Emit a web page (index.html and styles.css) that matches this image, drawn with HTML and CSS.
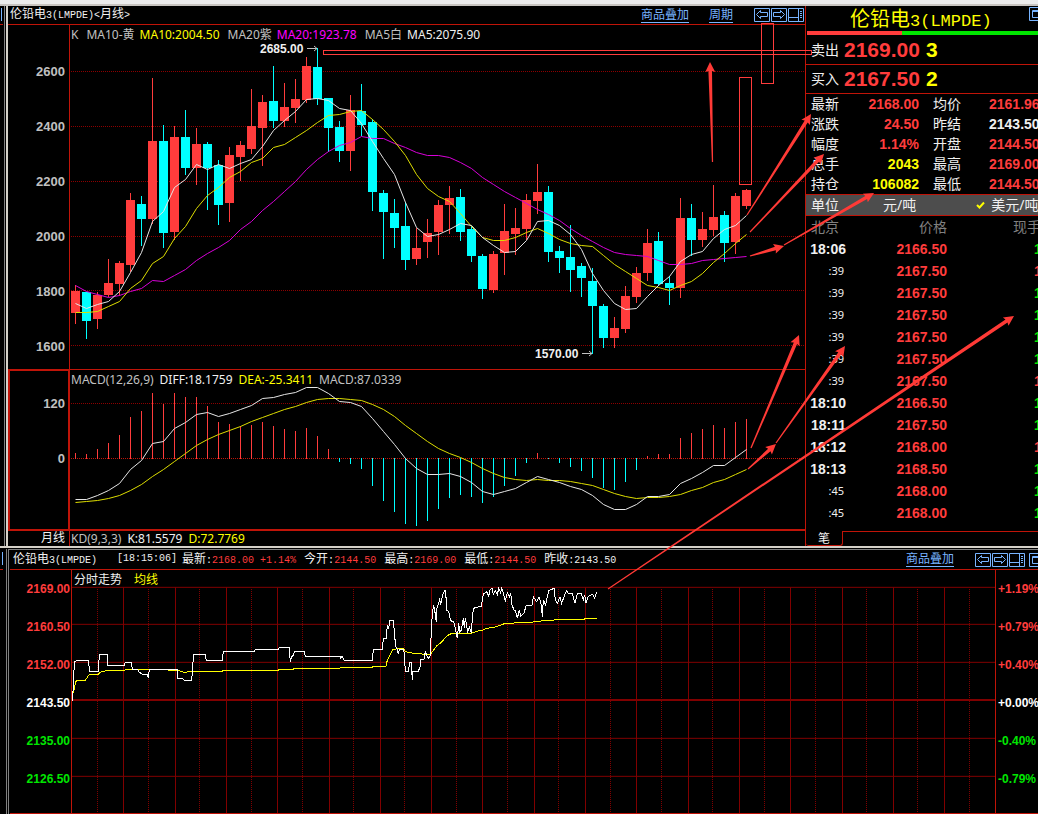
FILE: index.html
```html
<!DOCTYPE html>
<html lang="zh-CN">
<head>
<meta charset="utf-8">
<title>伦铅电3(LMPDE)</title>
<link rel="stylesheet" href="styles.css">
</head>
<body>
<svg class="defs" aria-hidden="true">
  <symbol id="i-left" viewBox="0 0 16 14"><path d="M.5.5h15v13H.5zM2.5 6.500l4-4v2h7v4h-7v2z"/></symbol>
  <symbol id="i-right" viewBox="0 0 16 14"><path d="M.5.5h15v13H.5zM13.500 6.500l-4-4v2h-7v4h7v2z"/></symbol>
  <symbol id="i-split" viewBox="0 0 16 14"><path d="M.5.5h15v13H.5zM10.500 .5v13M.5 9.500h10M12 3.500h2M12 5.500h2M12 7.500h2M12 9.500h2"/></symbol>
  <symbol id="i-window" viewBox="0 0 16 14"><path d="M.5.5h15v13H.5zM3.500 3.500h9v7h-9zM3.500 4.500h9"/></symbol>
</svg>
<div class="frame"></div>
<main class="screen">
  <div class="sliver"></div>
  <section class="monthly">
    <header class="bar">
      <h1 class="name">伦铅电<span class="lat">3(LMPDE)&lt;</span>月线<span class="lat">&gt;</span></h1>
      <nav class="links"><a href="#">商品叠加</a><a href="#">周期</a></nav>
      <div class="tools">
        <button aria-label="上一个"><svg><use href="#i-left"/></svg></button>
        <button aria-label="下一个"><svg><use href="#i-right"/></svg></button>
        <button aria-label="分栏"><svg><use href="#i-split"/></svg></button>
      </div>
    </header>
    <div class="pane candles">
      <ul class="axis">
        <li>2600</li><li>2400</li><li>2200</li><li>2000</li><li>1800</li><li>1600</li>
      </ul>
      <div class="plot">
        <p class="legend ma"><span class="dim">K</span><span class="dim">MA10-黄</span><span class="val yellow">MA10:2004.50</span><span class="dim">MA20紫</span><span class="val magenta">MA20:1923.78</span><span class="dim">MA5白</span><span class="val">MA5:2075.90</span></p>
        <svg id="candle-plot" viewBox="70 45 735 324" preserveAspectRatio="none"></svg>
      </div>
    </div>
    <div class="pane macd">
      <ul class="axis picked"><li>120</li><li>0</li></ul>
      <div class="plot">
        <p class="legend"><span class="dim">MACD(12,26,9)</span><span>DIFF:18.1759</span><span class="yellow">DEA:-25.3411</span><span class="dim">MACD:87.0339</span></p>
        <svg id="macd-plot" viewBox="70 390 735 139" preserveAspectRatio="none"></svg>
      </div>
    </div>
    <div class="pane kd">
      <span class="period">月线</span>
      <p class="legend"><span class="dim">KD(9,3,3)</span><span>K:81.5579</span><span class="yellow">D:72.7769</span></p>
    </div>
  </section>

  <aside class="quote">
    <header class="title">
      <h2>伦铅电<span>3(LMPDE)</span></h2>
      <button aria-label="窗口"><svg><use href="#i-window"/></svg></button>
    </header>
    <div class="ratio"><i></i></div>
    <p class="order ask"><span>卖出</span><b class="red">2169.00</b><b class="yellow">3</b></p>
    <p class="order"><span>买入</span><b class="red">2167.50</b><b class="yellow">2</b></p>
    <table class="stats">
      <colgroup><col class="k"><col class="v"><col class="k2"><col></colgroup>
      <tbody>
      <tr><th>最新</th><td class="red">2168.00</td><th>均价</th><td class="red">2161.96</td></tr>
      <tr><th>涨跌</th><td class="red">24.50</td><th>昨结</th><td>2143.50</td></tr>
      <tr><th>幅度</th><td class="red">1.14%</td><th>开盘</th><td class="red">2144.50</td></tr>
      <tr><th>总手</th><td class="yellow">2043</td><th>最高</th><td class="red">2169.00</td></tr>
      <tr><th>持仓</th><td class="yellow">106082</td><th>最低</th><td class="red">2144.50</td></tr>
      </tbody>
    </table>
    <div class="unit"><span>单位</span><span class="cny">元/吨</span><svg class="check" viewBox="0 0 9 8"><path d="M1 4l2.500 2.500L8 1.500"/></svg><span>美元/吨</span></div>
    <table class="ticks">
      <colgroup><col class="t"><col class="p"><col></colgroup>
      <thead><tr><th>北京</th><th>价格</th><th>现手</th></tr></thead>
      <tbody>
      <tr><td>18:06</td><td>2166.50</td><td class="green">1</td></tr>
      <tr><td class="s">:39</td><td>2167.50</td><td class="red">1</td></tr>
      <tr><td class="s">:39</td><td>2167.50</td><td class="green">1</td></tr>
      <tr><td class="s">:39</td><td>2167.50</td><td class="green">1</td></tr>
      <tr><td class="s">:39</td><td>2167.50</td><td class="green">1</td></tr>
      <tr><td class="s">:39</td><td>2167.50</td><td class="green">1</td></tr>
      <tr><td class="s">:39</td><td>2167.50</td><td class="red">1</td></tr>
      <tr><td>18:10</td><td>2166.50</td><td class="green">1</td></tr>
      <tr><td>18:11</td><td>2167.50</td><td class="green">1</td></tr>
      <tr><td>18:12</td><td>2168.00</td><td class="red">1</td></tr>
      <tr><td>18:13</td><td>2168.50</td><td class="green">1</td></tr>
      <tr><td class="s">:45</td><td>2168.00</td><td class="green">1</td></tr>
      <tr><td class="s">:45</td><td>2168.00</td><td class="green">1</td></tr>
      </tbody>
    </table>
    <div class="tabs"><button>笔</button><span></span></div>
  </aside>
</main>

<div class="screen lower">
  <div class="sliver"></div>
  <section class="intraday">
    <header class="bar">
      <h2 class="name">伦铅电<span class="lat">3(LMPDE)</span></h2>
      <p class="facts">
        <span class="lat">[18:15:06]</span>
        <span>最新<span class="lat">:<i class="red">2168.00 +1.14%</i></span></span>
        <span>今开<span class="lat">:<i class="red">2144.50</i></span></span>
        <span>最高<span class="lat">:<i class="red">2169.00</i></span></span>
        <span>最低<span class="lat">:<i class="red">2144.50</i></span></span>
        <span>昨收<span class="lat">:2143.50</span></span>
      </p>
      <nav class="links"><a href="#">商品叠加</a></nav>
      <div class="tools">
        <button aria-label="上一个"><svg><use href="#i-left"/></svg></button>
        <button aria-label="下一个"><svg><use href="#i-right"/></svg></button>
        <button aria-label="分栏"><svg><use href="#i-split"/></svg></button>
        <button class="win" aria-label="窗口"><svg><use href="#i-window"/></svg></button>
      </div>
    </header>
    <div class="day">
      <ul class="axis">
        <li class="red">2169.00</li><li class="red">2160.50</li><li class="red">2152.00</li><li class="white">2143.50</li><li class="green">2135.00</li><li class="green">2126.50</li>
      </ul>
      <div class="plot">
        <p class="legend"><span>分时走势</span><span class="yellow">均线</span></p>
        <svg id="day-plot" viewBox="216 111 2769 678" preserveAspectRatio="none"></svg>
      </div>
      <ul class="axis pct">
        <li class="red">+1.19%</li><li class="red">+0.79%</li><li class="red">+0.40%</li><li class="white">+0.00%</li><li class="green">-0.40%</li><li class="green">-0.79%</li>
      </ul>
    </div>
  </section>
</div>
<svg id="marks" class="marks" viewBox="0 0 1038 814" preserveAspectRatio="none" aria-hidden="true"></svg>
<script src="chart.js"></script>
</body>
</html>
```
FILE: styles.css
```css
* { box-sizing: border-box; margin: 0; padding: 0; }
body {
  position: relative;
  display: flex;
  flex-direction: column;
  min-height: 100vh;
  overflow: hidden;
  background: #000;
  color: #f0f0f0;
  font: 12px/16px "Noto Sans", "Noto Sans CJK SC", sans-serif;
}
ul { list-style: none; }
i { font-style: normal; }
button { display: block; border: 0; background: none; color: inherit; font: inherit; cursor: pointer; }
h1, h2 { font-weight: normal; }
.defs { position: absolute; width: 0; height: 0; }
.red { color: #ff3c3c; }
.green { color: #00e600; }
.yellow { color: #ff0; }
.magenta { color: #f0f; }
.white { color: #fff; }
.dim { color: #c0c0c0; }
.lat { font-family: "Liberation Mono", monospace; font-size: 10px; white-space: pre; }

.frame { height: 6px; background: #ebebeb; border-bottom: 2px solid #c8c4c0; }
.screen { display: grid; grid-template-columns: 8px minmax(0, 1fr) 233px; border-bottom: 2px solid #d4d0c8; }
.sliver {
  border-right: 2px solid #d4d0c8;
  background: linear-gradient(#808080, #808080) 4px 0 / 1px 100% no-repeat, linear-gradient(#78b4ff, #78b4ff) 1px 2px / 1px 13px no-repeat, linear-gradient(#c01408, #c01408) 0 18px / 3px 1px no-repeat;
}

.bar { display: flex; align-items: center; height: 19px; padding-left: 2px; border-bottom: 1px solid #c01408; white-space: nowrap; }
.name { font-size: 12px; line-height: 18px; }
.links { display: flex; gap: 20px; margin-left: auto; }
.links a { color: #78b4ff; text-decoration: none; line-height: 14px; border-bottom: 1px solid #78b4ff; }
.tools { display: flex; gap: 1px; margin-left: 21px; padding-right: 1px; }
.tools svg, .title svg { display: block; width: 16px; height: 14px; fill: none; stroke: #78b4ff; }

.pane { display: grid; grid-template-columns: 61px minmax(0, 1fr); }
.plot { border-left: 1px solid #c01408; }
.plot svg { display: block; width: 100%; overflow: visible; }
.axis { display: flex; flex-direction: column; gap: 39px; padding: 39px 4px 0 0; text-align: right; font: bold 13px/16px "Liberation Sans", Arial, sans-serif; color: #c0c0c0; }
.legend { display: flex; gap: 6px; height: 20px; padding-left: 1px; line-height: 20px; white-space: nowrap; }
.legend.ma { gap: 8px; }
.ma .val { margin-left: -3px; }
.candles { border-bottom: 1px solid #c01408; }
#candle-plot { height: 324px; }
.macd { border-bottom: 2px solid #c01408; }
#macd-plot { height: 139px; }
.axis.picked { padding: 25px 3px 0 0; border: 2px solid #c01408; border-width: 1px 2px 0; margin-right: -1px; }
.kd { height: 15px; }
.kd .legend { height: 15px; line-height: 16px; border-left: 1px solid #c01408; }
.period { padding-right: 4px; text-align: right; line-height: 14px; }

.quote { display: flex; flex-direction: column; overflow: hidden; border-left: 1px solid #c01408; font-size: 14px; white-space: nowrap; }
.title { display: flex; align-items: flex-start; justify-content: space-between; height: 25px; padding-left: 44px; color: #ff0; }
.title h2 { font-size: 20px; line-height: 25px; }
.title h2 span { font: 17px "Liberation Mono", monospace; }
.title button { margin: 1px -7px 0 0; }
.ratio { height: 4px; margin-left: 1px; background: #00e600; }
.ratio i { display: block; width: 41%; height: 4px; background: #ff3c3c; }
.order { display: flex; align-items: center; gap: 5px; height: 29px; padding-left: 5px; border-bottom: 1px solid #c01408; }
.order.ask { height: 30px; }
.order b { font: bold 21px/28px "Liberation Sans", Arial, sans-serif; }
.order .yellow { margin-left: 1px; }
table { width: 100%; table-layout: fixed; border-collapse: collapse; }
th { font-weight: normal; text-align: left; }
td { font: bold 14px/20px "Liberation Sans", Arial, sans-serif; }
.stats { border-bottom: 1px solid #c01408; }
.stats th, .stats td { height: 20px; line-height: 20px; }
.stats th { padding-left: 5px; }
.stats td:nth-child(2) { text-align: right; }
.stats th:nth-child(3) { padding-left: 14px; }
.k { width: 40px; }
.v { width: 73px; }
.k2 { width: 70px; }
.unit { display: flex; align-items: center; height: 21px; padding-left: 5px; background: #4d4d4d; border-bottom: 1px solid #c01408; }
.cny { margin: 0 60px 0 44px; }
.check { flex: none; width: 9px; height: 8px; margin-right: 6px; fill: none; stroke: #ff0; stroke-width: 2; }
.ticks th, .ticks td { height: 22px; line-height: 22px; }
.ticks th { color: #808080; padding-left: 5px; }
.ticks th:nth-child(2) { padding: 0; text-align: right; }
.ticks th:nth-child(3) { padding-left: 66px; }
.ticks td:nth-child(1) { text-align: right; }
.ticks td.s { padding-right: 2px; font: 11px/22px "Noto Sans", sans-serif; }
.ticks td:nth-child(2) { color: #ff3c3c; text-align: right; }
.ticks td:nth-child(3) { padding-left: 87px; }
.t { width: 40px; }
.p { width: 101px; }
.tabs { display: flex; height: 15px; margin-top: auto; font-size: 12px; }
.tabs button { width: 37px; height: 15px; border: 1px solid #c01408; border-width: 0 1px 1px 0; border-radius: 0 0 3px 3px; line-height: 13px; }
.tabs span { flex: 1; border-top: 1px solid #c01408; }

.screen.lower { flex: 1; grid-template-columns: 9px minmax(0, 1fr); border-top: 1px solid #000; border-bottom: 0; }
.lower .sliver { border-right: 1px solid #808080; background-position: 6px 0, 2px 3px, 0 20px; }
.intraday { display: flex; flex-direction: column; overflow: hidden; border-top: 1px solid #808080; }
.lower .bar { height: 20px; padding-left: 3px; margin-left: 1px; }
.facts { display: flex; gap: 8px; margin-left: 20px; }
.facts > :first-child { margin-right: -3px; }
.lower .tools { margin-right: -7px; padding: 0; }
.tools .win { margin-left: 3px; }
.day { flex: 1; display: grid; grid-template-columns: 61px minmax(0, 1fr) 43px; margin-left: 1px; border-bottom: 1px solid #c01408; }
.day .axis { gap: 22px; padding: 11px 1px 0 0; font-size: 12px; }
.day .axis .red { color: #ff3c3c; }
.day .pct { padding: 11px 0 0 2px; text-align: left; border-left: 1px solid #c01408; white-space: nowrap; }
.day .legend { gap: 12px; height: 17px; padding-left: 2px; line-height: 19px; }
#day-plot { height: 226px; }
.marks { position: absolute; left: 0; top: 0; width: 100%; height: 814px; pointer-events: none; }
.note { font: bold 12px "Liberation Sans", Arial, sans-serif; fill: #f0f0f0; }
```
FILE: chart.js
```js
const NS = 'http://www.w3.org/2000/svg';
const RED = '#ff3c3c', CYAN = '#00ffff';
const X0 = 75.5, STEP = 11;

function add(svg, tag, attrs) {
  const el = document.createElementNS(NS, tag);
  for (const k in attrs) el.setAttribute(k, attrs[k]);
  svg.appendChild(el);
  return el;
}
function line(svg, x1, y1, x2, y2, stroke, extra) {
  return add(svg, 'line', Object.assign({ x1, y1, x2, y2, stroke, 'vector-effect': 'non-scaling-stroke' }, extra));
}
function series(svg, ys, stroke) {
  add(svg, 'polyline', { points: ys.map((y, i) => (X0 + i * STEP) + ',' + (y + 0.5)).join(' '), fill: 'none', stroke });
}

// One row per month: direction (1 up, 0 down), high, body top, body bottom, low
const candles = [
  [1,285,291,313,324],[0,292,292,321,339],[1,292,295,319,329],[1,259,283,295,297],[1,261,263,284,296],
  [1,193,200,265,272],[0,196,204,219,246],[1,78,141,219,224],[0,125,141,233,248],[1,126,137,232,240],
  [0,110,137,168,175],[1,128,144,168,185],[0,142,144,168,210],[0,160,165,205,225],[1,147,155,203,222],
  [1,141,145,157,181],[1,89,126,149,154],[1,95,102,128,166],[0,66,101,121,128],[1,83,107,121,127],
  [1,79,99,108,123],[1,57,66,100,103],[0,48,67,99,105],[0,98,98,128,152],[0,121,127,151,162],
  [1,95,110,151,171],[0,84,111,125,136],[0,119,122,192,211],[0,190,193,212,259],[0,199,213,228,248],
  [0,202,226,260,270],[1,228,248,259,265],[1,219,233,242,258],[1,200,205,232,255],[1,186,198,205,234],
  [0,189,197,232,241],[0,226,229,256,262],[0,254,256,289,299],[1,251,254,290,293],[1,204,231,253,275],
  [1,208,228,234,255],[1,194,200,229,240],[1,164,192,201,214],[0,186,192,252,262],[0,246,251,258,273],
  [0,225,257,270,292],[0,263,266,278,297],[0,268,281,306,354],[0,304,306,338,348],[1,317,328,338,348],
  [1,286,296,329,333],[1,267,273,297,303],[1,229,243,273,281],[0,232,241,284,286],[0,276,283,288,305],
  [1,198,218,288,298],[0,204,218,240,256],[1,212,229,240,247],[1,185,217,230,236],[0,211,215,243,262],
  [1,193,196,242,254],[1,189,190,206,209]
];
const ma5 = [303,308,304,301,291,272,252,221,211,187,179,164,169,164,168,163,159,146,130,120,111,99,98,100,108,110,123,141,158,174,202,227,236,234,229,223,225,237,245,252,251,240,221,220,225,234,249,273,290,303,309,308,296,285,276,261,254,251,238,229,225,215];
const ma10 = [312,312,311,306,301,288,280,263,256,238,226,208,195,187,177,171,162,158,147,144,137,130,122,115,114,111,110,119,129,141,155,174,188,196,201,213,226,237,240,240,237,232,228,233,239,243,245,246,255,264,271,278,285,287,290,285,281,273,262,253,243,234];
const ma20 = [285,291,294,297,295,291,288,280,281,275,269,260,253,247,240,229,221,210,201,191,181,169,159,151,145,142,136,138,138,143,147,152,155,155,157,162,168,177,184,191,197,203,209,214,220,228,235,241,247,252,254,255,256,260,264,264,263,260,259,258,257,256];
const hist = [453,454,449,443,435,417,411,393,404,393,397,397,406,422,424,426,425,422,426,429,431,428,436,449,462,464,469,486,501,512,524,526,521,509,498,495,497,503,497,486,476,463,453,459,463,467,471,478,488,490,482,470,456,454,454,438,433,429,425,428,422,419];
const diff = [499,499,495,490,483,469,460,443,441,428,422,414,412,416,413,409,405,398,397,394,392,387,387,393,401,402,406,418,431,444,458,468,474,474,473,476,482,491,494,491,488,482,476,479,482,486,489,495,504,509,509,504,496,496,494,483,478,472,465,465,457,449];
const dea = [502,501,500,498,495,490,484,476,469,461,453,445,439,434,430,426,421,417,413,409,406,402,399,398,398,399,400,404,409,416,425,433,441,448,453,457,462,468,473,477,479,480,479,480,480,481,483,485,489,493,496,498,497,497,496,494,490,487,482,479,474,469];

const c = document.getElementById('candle-plot');
[71,126,181,236,290,345].forEach(y => line(c, 71, y + .5, 805, y + .5, '#8c0000', { 'stroke-dasharray': '1 1' }));
candles.forEach(([up, hi, top, bot, lo], i) => {
  const x = X0 + i * STEP, col = up ? RED : CYAN;
  line(c, x, hi, x, lo, col);
  add(c, 'rect', { x: x - 4.5, y: top, width: 9, height: bot - top, fill: col });
});
series(c, ma20, '#d800d8');
series(c, ma10, '#dede00');
series(c, ma5, '#e6e6e6');
function note(text, x, y, tip, tipY) {
  const t = add(c, 'text', { x, y, class: 'note' });
  t.textContent = text;
  add(c, 'path', { d: `M${tip - 11} ${tipY}h10M${tip - 4} ${tipY - 2.5}l3 2.5l-3 2.5`, fill: 'none', stroke: '#c0c0c0' });
}
note('2685.00', 260, 53, 318, 48.5);
note('1570.00', 535, 358, 593, 353.5);

const m = document.getElementById('macd-plot');
line(m, 71, 403.5, 805, 403.5, '#8c0000', { 'stroke-dasharray': '1 1' });
line(m, 71, 458.5, 805, 458.5, '#c01408', { 'stroke-dasharray': '1 1' });
hist.forEach((y, i) => {
  const x = X0 + i * STEP;
  line(m, x, y < 458 ? 459 : 458, x, y, y < 458 ? RED : CYAN);
});
series(m, dea, '#dede00');
series(m, diff, '#e6e6e6');

// Intraday plot, three units to a pixel
const d = document.getElementById('day-plot');
[112,223,337,565,679].forEach(y => line(d, 216, y, 2985, y, '#800000'));
line(d, 216, 450, 2985, 450, '#800000', { 'stroke-width': 2 });
for (let k = 0; k < 18; k++) {
  const x = 216 + Math.round(k * 51.3) * 3 + 1.5;
  if (k) line(d, x, 112, x, 789, '#800000');
  const h = 216 + Math.round((k + .5) * 51.3) * 3 - 1.5;
  if (h < 2980) line(d, h, 117, h, 789, '#800000', { 'stroke-dasharray': '1 1' });
}
const dayPath = (pts, stroke) => add(d, 'polyline', { points: pts, fill: 'none', stroke, 'vector-effect': 'non-scaling-stroke', 'shape-rendering': 'crispEdges' });
dayPath('220,430 224,408 229,391 256,391 268,373 295,373 300,367 322,361 373,361 380,358 445,358 532,361 553,367 580,364 667,364 670,361 835,361 838,358 880,358 883,355 1020,355 1022,352 1117,352 1120,349 1158,349 1162,330 1170,315 1178,298 1210,295 1216,305 1240,310 1280,313 1291,313 1310,288 1326,275 1340,258 1355,250 1414,250 1430,244 1450,240 1460,235 1490,230 1516,220 1540,220 1545,217 1600,216 1602,214 1645,212 1680,208 1753,208 1756,205 1790,205', '#ffff00');
dayPath('217,452 220,410 223,335 232,331 266,331 268,364 295,364 298,313 322,313 324,346 373,346 376,337 394,337 397,358 412,358 418,367 427,373 442,373 445,385 448,358 532,358 534,385 547,385 553,391 574,391 578,364 580,313 615,313 619,331 667,331 670,304 763,304 766,298 835,298 838,292 868,292 871,337 874,322 880,316 883,304 913,304 916,319 1020,319 1020,325 1023,325 1026,319 1032,331 1117,331 1120,298 1147,298 1150,265 1159,265 1162,225 1166,235 1170,211 1180,211 1182,235 1187,290 1192,298 1195,313 1198,300 1210,298 1213,310 1216,364 1225,364 1229,337 1234,337 1237,391 1239,364 1255,364 1260,350 1263,328 1272,328 1276,305 1279,313 1285,325 1290,320 1293,265 1297,190 1301,165 1304,180 1309,217 1311,175 1316,160 1319,145 1322,165 1328,135 1334,122 1337,122 1340,180 1346,185 1352,212 1361,216 1366,235 1372,265 1376,220 1379,245 1384,240 1390,205 1393,235 1396,205 1403,244 1408,232 1414,250 1418,190 1423,172 1444,170 1450,132 1460,125 1466,138 1470,120 1476,115 1480,133 1486,123 1492,135 1496,115 1502,128 1505,115 1510,130 1516,152 1522,128 1528,140 1532,128 1536,165 1542,180 1546,180 1552,205 1558,180 1562,198 1572,190 1578,167 1596,165 1600,140 1610,155 1617,140 1624,165 1627,200 1630,150 1637,165 1642,140 1646,122 1662,115 1666,150 1672,160 1680,140 1685,160 1692,140 1700,122 1704,130 1717,130 1725,160 1732,132 1744,130 1750,150 1754,135 1758,160 1764,140 1778,132 1784,145 1790,126', '#ffffff');

// Hand-drawn marks over the screen
const o = document.getElementById('marks');
[[323.5, 50.5, 488, 4], [739.5, 77.5, 12, 107], [761.5, 23.5, 12, 60]].forEach(([x, y, width, height]) =>
  add(o, 'rect', { x, y, width, height, fill: 'none', stroke: RED }));
function arrow(x1, y1, x2, y2) {
  const len = Math.hypot(x2 - x1, y2 - y1), ux = (x2 - x1) / len, uy = (y2 - y1) / len;
  const at = (along, side) => (x1 + ux * along - uy * side).toFixed(1) + ',' + (y1 + uy * along + ux * side).toFixed(1);
  const n = len - 9;
  add(o, 'polygon', { points: [at(0, -.6), at(n, -1.8), at(n - 1, -5), at(len, 0), at(n - 1, 5), at(n, 1.8), at(0, .6)].join(' '), fill: '#ff3a36' });
}
[[712.5,162,710,62],[747,215,811,114],[750,232,824,154],[750,256,784,246],[784,245,874,193],
 [751,448,799,335],[748,469,776,444],[776,443,845,346],[608,589,1014,316]].forEach(a => arrow(...a));
```
